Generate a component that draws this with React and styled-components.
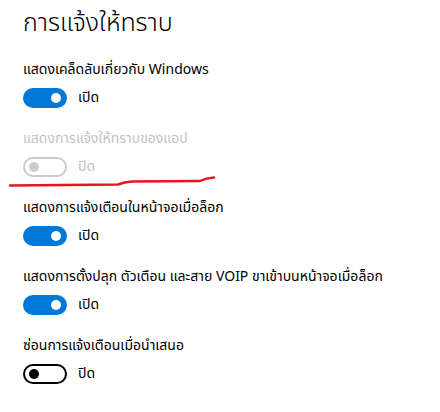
import React from "react";
import styled, { createGlobalStyle } from "styled-components";

const Global = createGlobalStyle`
  html, body { margin: 0; padding: 0; background: #fff; }
  body { font-family: "Leelawadee UI", "Noto Sans Thai", "Noto Sans", "DejaVu Sans", sans-serif; }
`;

const Page = styled.div`
  position: relative;
  width: 440px;
  height: 412px;
  box-sizing: border-box;
  padding: 8px 0 0 23px;
  display: flex;
  flex-direction: column;
  overflow: hidden;
`;

const Title = styled.h1`
  margin: 0 0 22px 0;
  font-size: 25px;
  font-weight: 300;
  line-height: 30px;
  color: #000;
`;

const List = styled.div`
  display: flex;
  flex-direction: column;
  gap: 21px;
`;

const Setting = styled.div`
  display: flex;
  flex-direction: column;
  gap: 8px;
`;

const Label = styled.div`
  font-size: 14px;
  line-height: 20px;
  color: ${(p) => (p.$disabled ? "#c2c2c2" : "#000")};
  white-space: nowrap;
`;

const Row = styled.div`
  display: flex;
  align-items: center;
  gap: 11px;
  height: 20px;
`;

const Track = styled.div`
  box-sizing: border-box;
  width: 44px;
  height: 20px;
  border-radius: 10px;
  display: flex;
  align-items: center;
  padding: 0 4px;
  justify-content: ${(p) => (p.$on ? "flex-end" : "flex-start")};
  background: ${(p) => (p.$on ? "#0078d7" : "transparent")};
  border: 2px solid
    ${(p) => (p.$on ? "#0078d7" : p.$disabled ? "#cccccc" : "#000")};
`;

const Knob = styled.div`
  width: 10px;
  height: 10px;
  border-radius: 50%;
  background: ${(p) => (p.$on ? "#fff" : p.$disabled ? "#cccccc" : "#000")};
`;

const State = styled.span`
  font-size: 14px;
  line-height: 20px;
  color: ${(p) => (p.$disabled ? "#c2c2c2" : "#000")};
`;

const Scribble = styled.svg`
  position: absolute;
  left: 0;
  top: 0;
  pointer-events: none;
`;

const items = [
  { label: "แสดงเคล็ดลับเกี่ยวกับ Windows", on: true },
  { label: "แสดงการแจ้งให้ทราบของแอป", on: false, disabled: true },
  { label: "แสดงการแจ้งเตือนในหน้าจอเมื่อล็อก", on: true },
  { label: "แสดงการตั้งปลุก ตัวเตือน และสาย VOIP ขาเข้าบนหน้าจอเมื่อล็อก", on: true },
  { label: "ซ่อนการแจ้งเตือนเมื่อนำเสนอ", on: false },
];

export default function App() {
  return (
    <Page>
      <Global />
      <Title>การแจ้งให้ทราบ</Title>
      <List>
        {items.map((it) => (
          <Setting key={it.label}>
            <Label $disabled={it.disabled}>{it.label}</Label>
            <Row>
              <Track $on={it.on} $disabled={it.disabled}>
                <Knob $on={it.on} $disabled={it.disabled} />
              </Track>
              <State $disabled={it.disabled}>{it.on ? "เปิด" : "ปิด"}</State>
            </Row>
          </Setting>
        ))}
      </List>
      <Scribble width="440" height="412" viewBox="0 0 440 412">
        <path
          d="M10 185.5 L118 184.5 Q124 182 132 181.5 L200 181 Q206 178 214 177.5"
          fill="none"
          stroke="#e8141f"
          strokeWidth="2.5"
          strokeLinecap="round"
        />
      </Scribble>
    </Page>
  );
}
